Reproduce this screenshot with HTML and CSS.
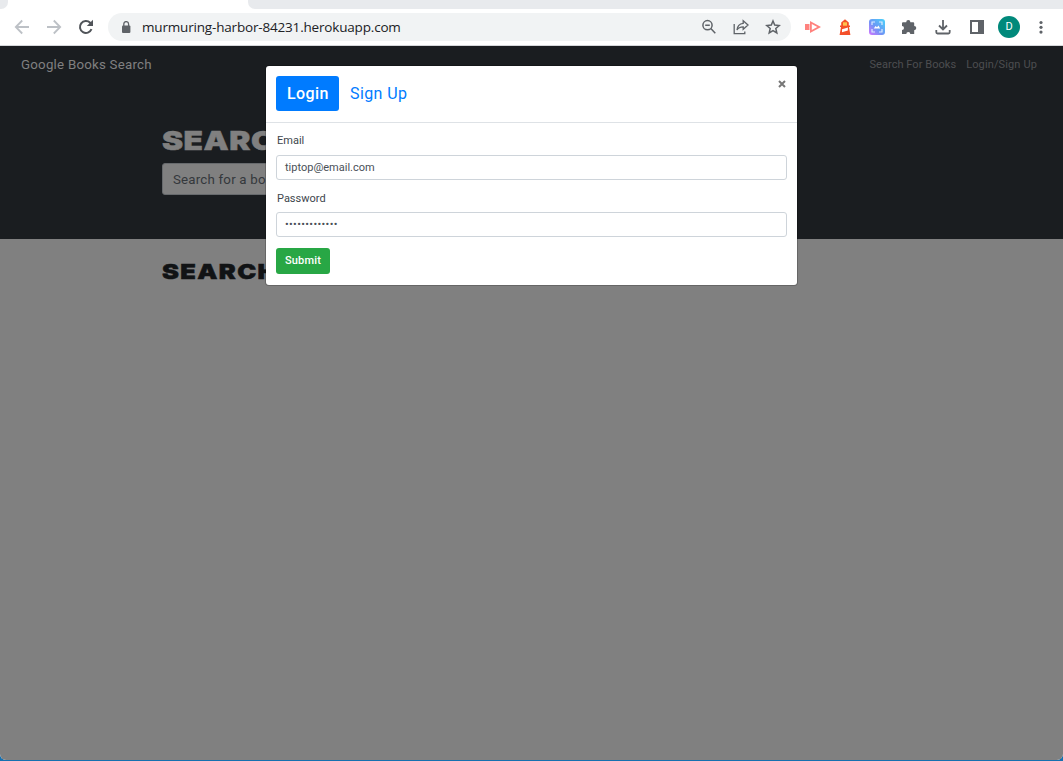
FILE: index.html
```html
<!DOCTYPE html>
<html lang="en">
<head>
<meta charset="utf-8">
<title>Google Books Search</title>
<link rel="stylesheet" href="styles.css">
</head>
<body>
<div class="window">
  <div class="tabstrip"><div class="tab-prev"></div><div class="tab-active"></div><div class="tab-rest"></div></div>
  <div class="toolbar">
    <div class="nav">
      <svg width="16" height="16" viewBox="0 0 16 16" fill="none" stroke="#bdc1c6" stroke-width="1.8"><path d="M15 8H2M8.2 1.5 1.8 8l6.4 6.5"/></svg>
      <svg width="16" height="16" viewBox="0 0 16 16" fill="none" stroke="#bdc1c6" stroke-width="1.8"><path d="M1 8h13M7.8 1.5 14.2 8l-6.4 6.5"/></svg>
      <svg width="16" height="16" viewBox="0 0 16 16" fill="none" stroke="#505459" stroke-width="2"><path d="M13.5 10.2A6 6 0 1 1 12.2 3.7L14 5.5"/><path d="M15 .8V7H8.8z" fill="#505459" stroke="none"/></svg>
    </div>
    <div class="address">
      <svg width="10" height="13" viewBox="0 0 10 13"><rect x="1" y="4.5" width="8.4" height="7.5" rx="1" fill="#5f6368"/><path d="M2.8 5V3a2.4 2.4 0 0 1 4.8 0v2" fill="none" stroke="#5f6368" stroke-width="1.3"/></svg>
      <span class="url">murmuring-harbor-84231.herokuapp.com</span>
      <div class="page-actions">
        <svg width="16" height="16" viewBox="0 0 16 16" fill="none" stroke="#5f6368" stroke-width="1.5"><circle cx="6.5" cy="6.2" r="4.6"/><path d="m9.8 9.6 4.5 4.7M4.2 6.2h4.6"/></svg>
        <svg width="16" height="16" viewBox="0 0 16 16" fill="none" stroke="#5f6368" stroke-width="1.3"><path d="M1.2 5v9.6h10.6v-2.2"/><path d="M10.2 1.8 15 6l-4.8 4.2V7.8C7.5 7.8 5.2 8.8 4 11c.3-3.7 2.5-6.3 6.2-6.7z"/></svg>
        <svg width="16" height="16" viewBox="0 0 16 16" fill="none" stroke="#5f6368" stroke-width="1.5"><path d="m8 2 1.7 4.1 4.5.4-3.4 3 1 4.4L8 11.6l-3.8 2.3 1-4.4-3.4-3 4.5-.4z"/></svg>
      </div>
    </div>
    <div class="extensions">
      <svg width="16" height="16" viewBox="0 0 16 16" fill="#ff827e"><path d="M0 5h4.500v6H0z"/><path fill-rule="evenodd" d="M5 2 16 8 5 14zM6.800 5v6L12.300 8z"/></svg>
      <svg width="16" height="16" viewBox="0 0 16 16"><path d="M4.200 3.500 8 .3l3.800 3.200v3h1.200v1.500h-1l1.400 8H2.600l1.400-8H3V6.500h1.200z" fill="#f4502a"/><path d="M6 3.300h4v3.400H6z" fill="#ffc34d"/><path d="m5 10.200 6-1.700-.2 3L5 13.200z" fill="#fff"/></svg>
      <svg width="16" height="16" viewBox="0 0 16 16"><defs><linearGradient id="cap" x1="0" y1="1" x2="1" y2="0"><stop offset="0" stop-color="#d574ff"/><stop offset=".45" stop-color="#6d96f5"/><stop offset="1" stop-color="#48d4fa"/></linearGradient></defs><rect width="16" height="16" rx="3" fill="url(#cap)"/><path d="M3 6V3h3M10 3h3v3M13 10v3h-3M6 13H3v-3" fill="none" stroke="#dcecff" stroke-width="1.2"/><path d="m4.800 9.500 1.700-2.500L8 8.300 9.500 6.500l1.700 3z" fill="#fff"/></svg>
      <svg width="16" height="16" viewBox="0 0 16 16"><path d="M2 3.200h3.200a2.100 2.100 0 0 1 4.200 0h2.800q1 0 1 1V7a2.100 2.100 0 0 1 0 4.200V15H9.300a2 2 0 0 0-4 0H1v-3.900a2 2 0 0 0 0-4V4.200q0-1 1-1z" fill="#5f6368"/></svg>
      <svg class="download" width="16" height="16" viewBox="0 0 16 16" fill="none" stroke="#5f6368" stroke-width="1.8"><path d="M8 1v9M4 6.500l4 4 4-4M1.300 11v2.300q0 1.200 1.200 1.200h11q1.200 0 1.200-1.200V11"/></svg>
      <svg class="side-panel" width="16" height="16" viewBox="0 0 16 16"><path d="M1 1h14v14H1z" fill="#5f6368"/><path d="M3 3h6v10H3z" fill="#fff"/></svg>
      <span class="avatar">D</span>
      <svg width="16" height="16" viewBox="0 0 16 16" fill="#5f6368"><circle cx="8" cy="3.500" r="1.600"/><circle cx="8" cy="8.300" r="1.600"/><circle cx="8" cy="13.100" r="1.600"/></svg>
    </div>
  </div>
  <main class="page">
    <nav class="navbar">
      <span class="brand">Google Books Search</span>
      <span class="link search-link">Search For Books</span><span class="link login-link">Login/Sign Up</span>
    </nav>
    <section class="hero">
      <h1><span>SEARC</span></h1>
      <div class="book-input">Search for a bo</div>
    </section>
    <section class="results"><h2><span>SEARCH</span></h2></section>
    <div class="overlay">
      <div class="modal">
        <div class="modal-header">
          <span class="pill active">Login</span><span class="pill">Sign Up</span>
          <svg class="close" width="8" height="8" viewBox="0 0 8 8"><path d="m1 1 6 6M7 1 1 7" stroke="#777" stroke-width="2"/></svg>
        </div>
        <form class="form">
          <label class="label-email">Email</label>
          <div class="field"><span class="email">tiptop@email.com</span></div>
          <label class="label-password">Password</label>
          <div class="field"><span class="password">•••••••••••••</span></div>
          <div class="submit">Submit</div>
        </form>
      </div>
    </div>
  </main>
</div>
</body>
</html>
```
FILE: styles.css
```css
* { box-sizing: border-box; }
body { margin: 0; background: #1670b0; font-family: Roboto, "Liberation Sans", sans-serif; overflow: hidden; }
svg { display: block; flex: none; }
.window { height: 760px; display: flex; flex-direction: column; border-radius: 0 0 6px 6px; overflow: hidden; background: #fff; }
.tabstrip { height: 9px; display: flex; flex: none; }
.tab-prev { width: 8px; background: #e8eaed; border-bottom-right-radius: 7px; }
.tab-active { width: 240px; }
.tab-rest { flex: 1; background: #e8eaed; border-bottom-left-radius: 7px; }
.toolbar { height: 37px; flex: none; display: flex; align-items: center; border-bottom: 1px solid #d5d7da; }
.nav { width: 108px; padding-left: 14px; display: flex; gap: 16px; }
.address { width: 683px; height: 28px; border-radius: 14px; background: #f1f3f4; display: flex; align-items: center; padding: 0 10px 0 13px; }
.url { margin-left: 11px; font: 13.5px/20px "Open Sans", "Noto Sans", sans-serif; color: #202124; letter-spacing: -.18px; white-space: nowrap; }
.page-actions { margin-left: auto; display: flex; gap: 16px; }
.extensions { padding-left: 14px; display: flex; align-items: center; gap: 16px; }
.download, .side-panel { margin-left: 2px; }
.avatar { width: 22px; height: 22px; margin: 0 -3px; border-radius: 50%; background: #00897b; color: #fff; font-size: 11px; line-height: 22px; text-align: center; }
.page { flex: 1; position: relative; background: #808080; }
.navbar { height: 38px; padding: 0 26px 0 21px; display: flex; align-items: center; background: #1a1d20; color: #808080; white-space: nowrap; }
.brand { margin-right: auto; font-size: 13.3px; line-height: 20px; letter-spacing: .23px; }
.link { font-size: 11px; line-height: 20px; color: #4d4e50; letter-spacing: .05px; }
.login-link { margin-left: 10px; letter-spacing: .13px; }
.hero { height: 155px; padding: 41px 162px 0; background: #1a1d20; }
h1, h2 { margin: 0; font-family: Inter, sans-serif; font-weight: 900; white-space: nowrap; }
h1 span, h2 span { display: inline-block; transform-origin: left; -webkit-text-stroke: .5px currentColor; }
h1 { height: 38px; font-size: 26px; line-height: 32px; color: #808080; }
h1 span { transform: scaleX(1.22); letter-spacing: .4px; }
.book-input { width: 491px; height: 32px; padding: 0 10px; border: 1px solid #676a6d; border-radius: 3px; background: #808080; color: #34383c; font-size: 13.3px; line-height: 31px; letter-spacing: .2px; }
.results { padding: 19px 162px 0; }
h2 { font-size: 20.500px; line-height: 28px; color: #111315; }
h2 span { transform: scaleX(1.24); letter-spacing: 1.1px; }
.overlay { position: absolute; inset: 0; display: flex; justify-content: center; align-items: flex-start; padding-top: 20px; }
.modal { width: 531px; height: 219px; background: #fff; border-radius: 3px; box-shadow: 0 0 0 1px rgba(0,0,0,.2); }
.modal-header { height: 57px; display: flex; align-items: flex-start; padding: 10px 11px 0 10px; border-bottom: 1px solid #dee2e6; }
.pill { height: 35px; padding: 0 11px; color: #007bff; font-size: 16px; line-height: 35px; letter-spacing: .4px; white-space: nowrap; }
.active { width: 63px; border-radius: 3px; background: #007bff; color: #fff; font-weight: 500; }
.close { margin: 4px 0 0 auto; }
.form { padding: 10px 10px 0; display: flex; flex-direction: column; align-items: flex-start; color: #40464c; font-size: 11px; }
.form label { height: 22px; line-height: 15px; padding-left: 1px; }
.form .label-password { height: 21px; margin-top: 11px; }
.field { width: 511px; height: 25px; padding: 0 8px; border: 1px solid #ced4da; border-radius: 3px; line-height: 23px; color: #495057; }
.password { letter-spacing: .35px; }
.submit { width: 54px; height: 26px; margin-top: 11px; border-radius: 3px; background: #28a745; color: #fff; font-weight: 500; line-height: 25px; text-align: center; letter-spacing: .15px; }
```
